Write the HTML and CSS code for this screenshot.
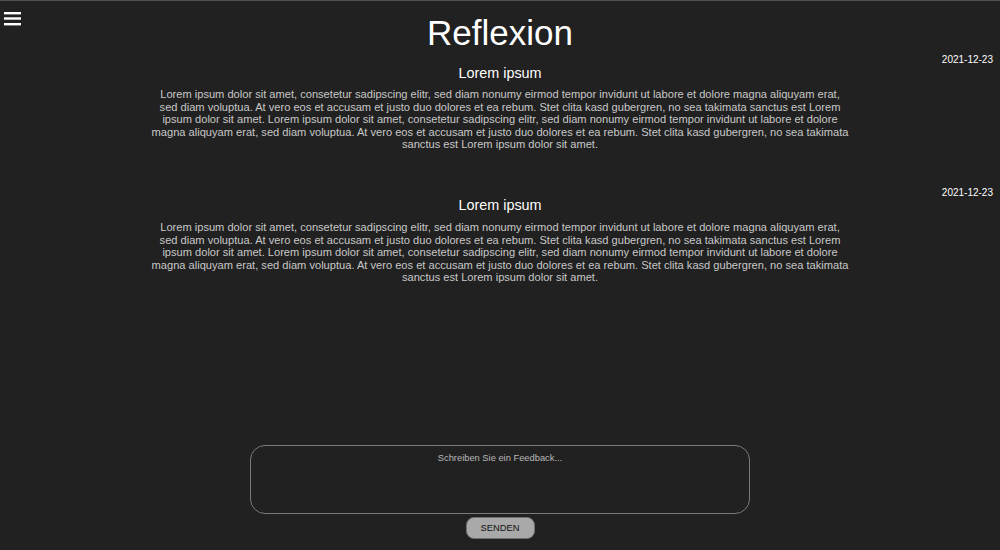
FILE: index.html
```html
<!DOCTYPE html>
<html lang="de">
<head>
<meta charset="utf-8">
<title>Reflexion</title>
<link rel="stylesheet" href="styles.css">
</head>
<body>
<div class="page">
  <header class="header">
    <button class="menu" aria-label="Menü">
      <svg width="18" height="16" viewBox="0 0 18 16">
        <rect x="0" y="0" width="17" height="2.4" fill="#ffffff"/>
        <rect x="0" y="5.3" width="17" height="2.4" fill="#ffffff"/>
        <rect x="0" y="11" width="17" height="2.4" fill="#ffffff"/>
      </svg>
    </button>
    <h1 class="title">Reflexion</h1>
    <div></div>
  </header>
  <main class="entries">
    <article class="entry">
      <div class="date">2021-12-23</div>
      <h2 class="entry-title">Lorem ipsum</h2>
      <p class="entry-text">Lorem ipsum dolor sit amet, consetetur sadipscing elitr, sed diam nonumy eirmod tempor invidunt ut labore et dolore magna aliquyam erat, sed diam voluptua. At vero eos et accusam et justo duo dolores et ea rebum. Stet clita kasd gubergren, no sea takimata sanctus est Lorem ipsum dolor sit amet. Lorem ipsum dolor sit amet, consetetur sadipscing elitr, sed diam nonumy eirmod tempor invidunt ut labore et dolore magna aliquyam erat, sed diam voluptua. At vero eos et accusam et justo duo dolores et ea rebum. Stet clita kasd gubergren, no sea takimata sanctus est Lorem ipsum dolor sit amet.</p>
    </article>
    <article class="entry">
      <div class="date">2021-12-23</div>
      <h2 class="entry-title">Lorem ipsum</h2>
      <p class="entry-text">Lorem ipsum dolor sit amet, consetetur sadipscing elitr, sed diam nonumy eirmod tempor invidunt ut labore et dolore magna aliquyam erat, sed diam voluptua. At vero eos et accusam et justo duo dolores et ea rebum. Stet clita kasd gubergren, no sea takimata sanctus est Lorem ipsum dolor sit amet. Lorem ipsum dolor sit amet, consetetur sadipscing elitr, sed diam nonumy eirmod tempor invidunt ut labore et dolore magna aliquyam erat, sed diam voluptua. At vero eos et accusam et justo duo dolores et ea rebum. Stet clita kasd gubergren, no sea takimata sanctus est Lorem ipsum dolor sit amet.</p>
    </article>
  </main>
  <form class="feedback">
    <textarea class="feedback-input" placeholder="Schreiben Sie ein Feedback..."></textarea>
    <button type="button" class="send">SENDEN</button>
  </form>
</div>
</body>
</html>
```
FILE: styles.css
```css
* { box-sizing: border-box; }
html, body {
  margin: 0;
  padding: 0;
  height: 100%;
  background: #212121;
}
body {
  font-family: "Liberation Sans", Arial, Helvetica, sans-serif;
  color: #ffffff;
  border-top: 1px solid #4a5157;
  overflow: hidden;
}
.page {
  height: 549px;
  display: flex;
  flex-direction: column;
}
.header {
  display: grid;
  grid-template-columns: 1fr auto 1fr;
  align-items: start;
  padding-top: 12px;
}
.menu {
  justify-self: start;
  background: none;
  border: 0;
  padding: 0;
  margin: -1px 0 0 4px;
  line-height: 0;
  cursor: pointer;
}
.title {
  margin: 0;
  font-size: 35px;
  font-weight: normal;
  line-height: 40px;
  color: #ffffff;
}
.entries {
  flex: 1;
}
.entry {
  margin-bottom: 35px;
}
.date {
  text-align: right;
  font-size: 10px;
  line-height: 12px;
  padding-top: 1px;
  padding-right: 7px;
  color: #ffffff;
}
.entry-title {
  margin: -1.5px 0 0;
  text-align: center;
  font-size: 14.4px;
  font-weight: normal;
  line-height: 16px;
  color: #ffffff;
}
.entry-text {
  width: 700px;
  margin: 7.5px auto 0;
  text-align: center;
  font-size: 11.1px;
  line-height: 12.6px;
  color: #c8c8c8;
}
.feedback {
  display: flex;
  flex-direction: column;
  align-items: center;
  gap: 3px;
  padding-bottom: 11px;
}
.feedback-input {
  width: 500px;
  height: 69px;
  background: #212121;
  border: 1.5px solid #7a7a7a;
  border-radius: 15px;
  padding: 7px 10px;
  resize: none;
  text-align: center;
  font-family: "Liberation Sans", Arial, sans-serif;
  font-size: 9.33px;
  color: #dddddd;
  outline: none;
}
.feedback-input::placeholder {
  color: #b8b8b8;
}
.send {
  width: 69px;
  height: 22px;
  background: #a9a9a9;
  border: 1.5px solid #6f6f6f;
  border-radius: 8px;
  font-family: "Liberation Sans", Arial, sans-serif;
  font-size: 9.33px;
  color: #111111;
  padding: 0;
  cursor: pointer;
}
```
